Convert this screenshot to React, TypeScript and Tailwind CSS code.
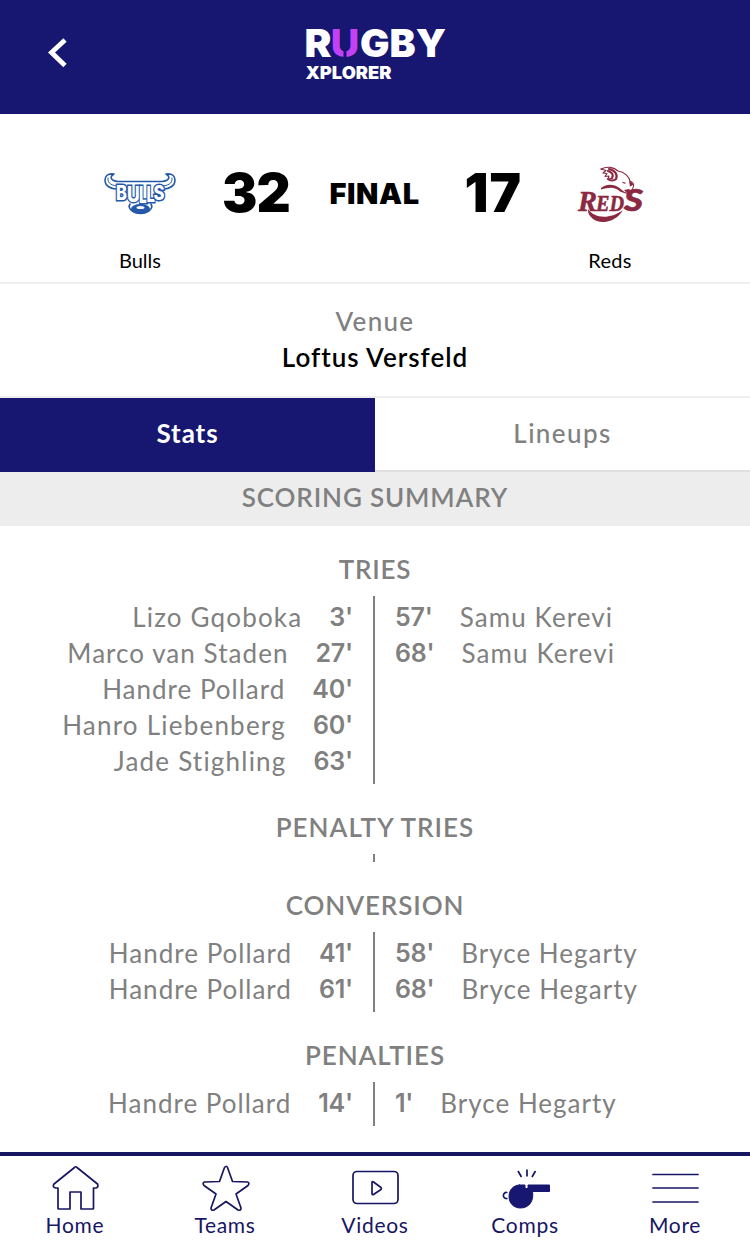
import type { ReactNode } from "react";

type Event = { name: string; time: string; tracking: string };
type Section = { title: string; tracking: string; home: Event[]; away: Event[] };

const sections: Section[] = [
  {
    title: "TRIES",
    tracking: "tracking-[0.8px]",
    home: [
      { name: "Lizo Gqoboka", time: "3'", tracking: "tracking-[1.17px]" },
      { name: "Marco van Staden", time: "27'", tracking: "tracking-[1.05px]" },
      { name: "Handre Pollard", time: "40'", tracking: "tracking-[1.0px]" },
      { name: "Hanro Liebenberg", time: "60'", tracking: "tracking-[1.22px]" },
      { name: "Jade Stighling", time: "63'", tracking: "tracking-[1.21px]" },
    ],
    away: [
      { name: "Samu Kerevi", time: "57'", tracking: "tracking-[1.1px]" },
      { name: "Samu Kerevi", time: "68'", tracking: "tracking-[1.1px]" },
    ],
  },
  { title: "PENALTY TRIES", tracking: "tracking-[1.05px]", home: [], away: [] },
  {
    title: "CONVERSION",
    tracking: "tracking-[0.9px]",
    home: [
      { name: "Handre Pollard", time: "41'", tracking: "tracking-[1.0px]" },
      { name: "Handre Pollard", time: "61'", tracking: "tracking-[1.0px]" },
    ],
    away: [
      { name: "Bryce Hegarty", time: "58'", tracking: "tracking-[1.0px]" },
      { name: "Bryce Hegarty", time: "68'", tracking: "tracking-[1.0px]" },
    ],
  },
  {
    title: "PENALTIES",
    tracking: "tracking-[0.9px]",
    home: [{ name: "Handre Pollard", time: "14'", tracking: "tracking-[1.0px]" }],
    away: [{ name: "Bryce Hegarty", time: "1'", tracking: "tracking-[1.0px]" }],
  },
];

function Logo() {
  return (
    <svg width="146" height="70" viewBox="-3 -14 146 70" className="block">
      <g fontFamily="Inter, sans-serif" fontWeight="900" fill="#fff">
        <text x="-0.5" y="29" fontSize="38" textLength="27" lengthAdjust="spacingAndGlyphs">R</text>
        <text x="25.500" y="29" fontSize="38" fontWeight="800" fill="#c341f5" textLength="29" lengthAdjust="spacingAndGlyphs">U</text>
        <text x="55" y="29" fontSize="38" textLength="86" lengthAdjust="spacingAndGlyphs">GBY</text>
        <text x="0.500" y="50.500" fontSize="17.500" fontWeight="900" textLength="86" lengthAdjust="spacingAndGlyphs">XPLORER</text>
      </g>
      <path d="M40 18v14" stroke="#171670" strokeWidth="3" />
    </svg>
  );
}

function BullsLogo() {
  return (
    <svg width="72" height="44" viewBox="0 0 72 44" className="block">
      <g fill="none" stroke="#2458a8" strokeWidth="1.6" strokeLinecap="round" strokeLinejoin="round">
        <path d="M10 2C3 1 1 5 1 8c0 6 6 9 11 9M10 2C5 5 7 9 14 9.500h44c7-.5 9-4.500 4-7.500 7-1 9 3 9 6 0 6-6 9-11 9" />
        <path d="M4 6c-1 6 5 8 11 8M68 6c1 6-5 8-11 8" strokeWidth="1" />
        <path d="M26 32c-3 5 4 9.500 10.500 9.500S50 37 47 32" />
      </g>
      <g fontFamily="Inter, sans-serif" fontWeight="800" fill="#fff" stroke="#2458a8" strokeWidth="3" strokeLinejoin="miter" style={{ paintOrder: "stroke" }}>
        <text x="12" y="27.500" fontSize="20" textLength="11" lengthAdjust="spacingAndGlyphs">B</text>
        <text x="23" y="29.500" fontSize="22" textLength="13" lengthAdjust="spacingAndGlyphs">U</text>
        <text x="35" y="30.500" fontSize="23" textLength="8.500" lengthAdjust="spacingAndGlyphs">L</text>
        <text x="42.500" y="29.500" fontSize="22" textLength="8.500" lengthAdjust="spacingAndGlyphs">L</text>
        <text x="49.500" y="27.500" fontSize="20" textLength="11" lengthAdjust="spacingAndGlyphs">S</text>
      </g>
      <ellipse cx="36.500" cy="37" rx="9.500" ry="5" fill="#2458a8" />
      <ellipse cx="36.500" cy="35.500" rx="4" ry="1.600" fill="#fff" />
    </svg>
  );
}

function RedsLogo() {
  return (
    <svg width="68" height="56" viewBox="0 0 68 56" className="block">
      <g fill="none" stroke="#8c2942" strokeLinecap="round" strokeLinejoin="round">
        <path d="M25 3C31 0 38 1 42 5c7 1 11 6 12 10 2 1 4 3 3.500 5-.5 4-3 6-6 7.500-3-.5-5-2-7-3.500" strokeWidth="1.100" />
        <path d="M25 3l5 1.500-3 2.500 4 .5-2 3 4-.5-1 3.500 4-1.500" strokeWidth="1.200" />
        <path d="M33 3c6 1 9 6 7 10-2 2-6 2-8 0M32 5c4 1 6 4 4 7" strokeWidth="2.200" />
        <path d="M47 16.500l2 .6" strokeWidth="1.300" />
      </g>
      <path d="M53 15q4 1 4 4l-3 1.500zM48 24l5-1 2 2-3.500 2.500z" fill="#8c2942" />
      <path d="M25 22C33 16 43 19 48 27l-4-1.500C39 20.500 33 21 25 23.500Z" fill="#8c2942" />
      <path d="M12 43c5 8 20 12 35 1-8 14-26 15-32 7-3-3-3-6-3-8z" fill="#8c2942" />
      <g fill="#8c2942" stroke="#8c2942" strokeWidth=".6" fontFamily="Liberation Serif, serif" fontWeight="700" fontStyle="italic">
        <text x="2" y="45" fontSize="30" textLength="19" lengthAdjust="spacingAndGlyphs">R</text>
        <text x="20" y="44.500" fontSize="24" textLength="28" lengthAdjust="spacingAndGlyphs">ED</text>
        <text x="48" y="45" fontSize="31" fontFamily="Lato, sans-serif" fontWeight="900" textLength="19" lengthAdjust="spacingAndGlyphs">S</text>
      </g>
    </svg>
  );
}

function Time({ t }: { t: string }) {
  return <span className="pt-[2px] font-[Inter] text-[25px] font-semibold tracking-[-0.2px]">{t}</span>;
}

function Row({ e, away = false }: { e: Event; away?: boolean }) {
  return (
    <div className={`flex h-9 items-center gap-[27px] whitespace-pre ${away ? "justify-start" : "justify-end"}`}>
      {away && <Time t={e.time} />}
      <span className={e.tracking}>{e.name}</span>
      {!away && <Time t={e.time} />}
    </div>
  );
}

function Tab({ label, children }: { label: string; children: ReactNode }) {
  return (
    <div className="flex w-[150px] flex-col items-center">
      <svg width="52" height="50" viewBox="0 0 52 50" fill="none" stroke="#171663" strokeWidth="1.7" strokeLinejoin="round" strokeLinecap="round" className="mt-[6px]">
        {children}
      </svg>
      <span className="-mt-px text-[21px] leading-7 tracking-[0.7px]">{label}</span>
    </div>
  );
}

export default function App() {
  return (
    <div className="flex h-[1248px] w-[750px] flex-col overflow-hidden bg-white font-[Lato,sans-serif] text-black">
      <header className="flex h-[114px] shrink-0 bg-[#171670]">
        <svg width="20" height="32" viewBox="0 0 20 32" className="mt-[37px] ml-[47px]">
          <path d="M18 3 4.500 15.500l13.500 13" fill="none" stroke="#fff" strokeWidth="4.800" />
        </svg>
        <div className="mt-[14px] ml-[235px]"><Logo /></div>
      </header>

      <section className="flex h-[170px] shrink-0 border-b-2 border-[#eee]">
        <div className="ml-[65px] flex w-[150px] flex-col items-center">
          <div className="mt-[58px] h-[74px]"><BullsLogo /></div>
          <span className="text-[20px] leading-7">Bulls</span>
        </div>
        <div className="flex h-[159px] w-[320px] items-center justify-between pr-[13px] pl-[7px] font-[Inter] font-black">
          <span className="text-[53px] tracking-[-1px]">32</span>
          <span className="-ml-[5px] text-[29px] tracking-[0.6px]">FINAL</span>
          <span className="text-[53px] tracking-[1px]">17</span>
        </div>
        <div className="flex w-[150px] flex-col items-center">
          <div className="mt-[52px] h-[80px]"><RedsLogo /></div>
          <span className="text-[20px] leading-7 tracking-[0.3px]">Reds</span>
        </div>
      </section>

      <section className="flex h-[114px] shrink-0 flex-col items-center border-b-2 border-[#eee] pt-[19px] text-[26px] leading-9">
        <span className="font-medium tracking-[1.3px] text-[#808080]">Venue</span>
        <span className="font-semibold tracking-[1px]">Loftus Versfeld</span>
      </section>

      <nav className="flex h-[74px] shrink-0 text-[26px]">
        <div className="flex w-[375px] items-center justify-center bg-[#171670] pb-[4px] font-bold tracking-[0.9px] text-white">Stats</div>
        <div className="flex w-[375px] items-center justify-center border-b-2 border-[#dfdfe1] pb-[2px] font-medium tracking-[1.4px] text-[#808080]">Lineups</div>
      </nav>

      <h2 className="flex h-[54px] shrink-0 items-center justify-center bg-[#ededed] pb-[4px] text-[26px] font-semibold tracking-[0.85px] text-[#808080]">SCORING SUMMARY</h2>

      <main className="flex grow flex-col gap-[25px] pt-[25px] text-[26px] text-[#808080]">
        {sections.map((s) => (
          <section key={s.title}>
            <h3 className={`mb-[9px] h-9 text-center leading-9 font-semibold ${s.tracking}`}>{s.title}</h3>
            <div className="flex">
              <div className="w-[375px] border-r-2 border-[#808080] pt-[3px] pr-[20px] pb-[5px]">
                {s.home.map((e) => <Row key={e.name + e.time} e={e} />)}
              </div>
              <div className="w-[375px] pt-[3px] pb-[5px] pl-[20px]">
                {s.away.map((e) => <Row key={e.name + e.time} e={e} away />)}
              </div>
            </div>
          </section>
        ))}
      </main>

      <footer className="flex h-24 shrink-0 border-t-4 border-[#171663] text-[#171663]">
        <Tab label="Home">
          <path d="M25.500 5.500Q26.500 4 28 5.500L48.500 22Q50 25 47 26H44.500V46.500Q44.500 47 44 47H32V30H21V47H9.500Q9 47 9 46.500V26H6.500Q3 25 5 22Z" />
        </Tab>
        <Tab label="Teams">
          <path d="M25.500 5.500Q27.500 3 28.500 5.500L33.500 19.500L48.500 20Q51 21 49 23.500L37 32L42 46Q42 49 39 48L27 39.500L15 48Q12 49 12 46L17 32L5 23.500Q3 21 5.500 20L20.500 19.500Z" />
        </Tab>
        <Tab label="Videos">
          <rect x="4" y="9.500" width="45" height="32" rx="4" />
          <path d="M23 20.500Q23 19 24.500 20L32 25.500Q33 26.500 32 27.500L24.500 32.500Q23 33 23 31.500Z" />
        </Tab>
        <Tab label="Comps">
          <path d="m19 9 3.500 6M28 7.500v7M36.500 9l-3.500 6" strokeLinecap="butt" />
          <path d="M7.800 30.500c-4.500-.5-4.500 6.500 0 6" />
          <path d="M20.500 23H26v3.500h3V23h21.500v6.500H33.500c1.500 9-3 16.500-12 16.500-7 0-11.500-5-11.500-11.500S14.500 23 20.500 23Z" fill="#171670" stroke="#171670" strokeWidth="1" />
        </Tab>
        <Tab label="More">
          <path d="M4 12.500H49M4 26H49M4 40H49" />
        </Tab>
      </footer>
    </div>
  );
}
